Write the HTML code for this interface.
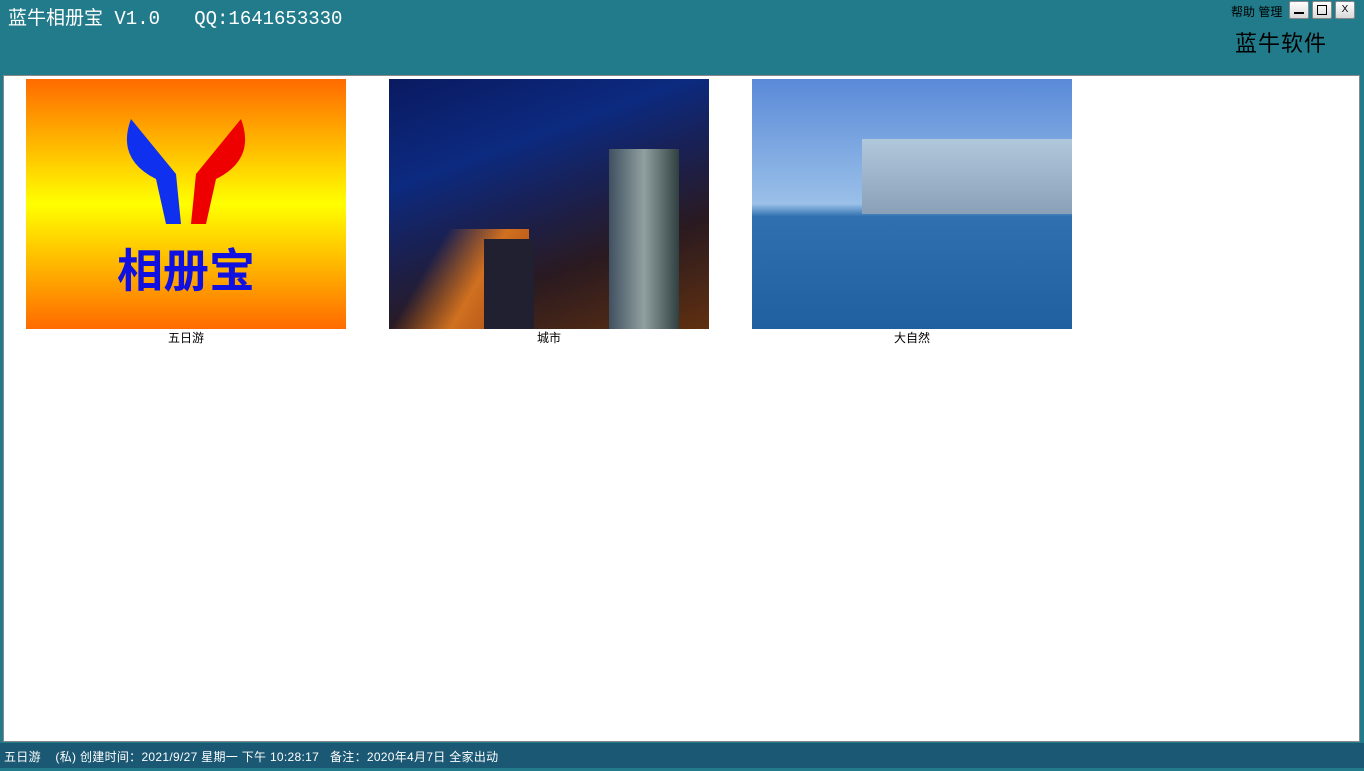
<!DOCTYPE html>
<html><head><meta charset="utf-8"><style>
body{margin:0;width:1364px;height:768px;overflow:hidden;background:#217b8a;font-family:"Liberation Sans","Noto Sans CJK SC",sans-serif;position:relative}
.t{position:absolute;left:8px;top:3px;color:#fff;font-family:"Liberation Mono","Noto Sans CJK SC",monospace;font-size:19px}
.main{position:absolute;left:3px;top:75px;width:1355px;height:665px;background:#fff;border:1px solid #888}
.im{position:absolute;top:3px;width:320px;height:250px;overflow:hidden}
.lb{position:absolute;top:253px;width:320px;text-align:center;font-size:12px;color:#000}
.sb{position:absolute;left:0;top:743px;width:1364px;height:25px;background:#1b5873;color:#fff;font-size:12px;line-height:28px;padding-left:4px;letter-spacing:0.3px}
.btn{position:absolute;top:1px;width:18px;height:16px;background:linear-gradient(#fff,#d8d8d8);border:1px solid #888;border-radius:2px;font-size:10px;text-align:center;line-height:16px;color:#000}
</style></head><body>
<div class="t">蓝牛相册宝 V1.0&nbsp;&nbsp;&nbsp;QQ:1641653330</div>
<div style="position:absolute;left:1231px;top:3px;font-size:12px;color:#000">帮助 管理</div>
<div class="btn" style="left:1289px"><div style="position:absolute;left:4px;top:10px;width:10px;height:2px;background:#000"></div></div>
<div class="btn" style="left:1312px"><div style="position:absolute;left:4px;top:3px;width:8px;height:8px;border:1px solid #000"></div></div>
<div class="btn" style="left:1335px">X</div>
<div style="position:absolute;left:1235px;top:26px;font-size:22px;color:#000;letter-spacing:1px">蓝牛软件</div>
<div class="main">
<div class="im" style="left:22px;background:linear-gradient(#ff6a00,#ffff00 50%,#ff6a00)">
<svg width="320" height="250"><path d="M105 40 Q90 80 130 100 L140 145 L155 145 L150 95 Z" fill="#1030f0"/><path d="M215 40 Q230 80 190 100 L180 145 L165 145 L170 95 Z" fill="#e00"/>
<text x="160" y="208" font-size="46" font-weight="bold" fill="#1010e0" text-anchor="middle" font-family="Noto Sans CJK SC">相册宝</text></svg></div>
<div class="lb" style="left:22px">五日游</div>
<div class="im" style="left:385px;background:linear-gradient(160deg,#0a1a60,#0c2a80 30%,#1a2050 50%,#2a1a20 70%,#603010)">
<div style="position:absolute;left:0;top:150px;width:140px;height:100px;background:linear-gradient(120deg,transparent 30%,#d07020 60%,#a04010)"></div>
<div style="position:absolute;left:220px;top:70px;width:70px;height:180px;background:linear-gradient(90deg,#405060,#90a0a0,#304040)"></div>
<div style="position:absolute;left:95px;top:160px;width:50px;height:90px;background:#202030"></div></div>
<div class="lb" style="left:385px">城市</div>
<div class="im" style="left:748px;background:linear-gradient(#5a8ad8,#9ac0e8 50%,#3070b0 55%,#2060a0)">
<div style="position:absolute;left:110px;top:60px;width:210px;height:75px;background:linear-gradient(#b0c8dc,#8aa0b8)"></div></div>
<div class="lb" style="left:748px">大自然</div>
</div>
<div class="sb">五日游&nbsp;&nbsp;&nbsp;&nbsp;(私) 创建时间：2021/9/27 星期一 下午 10:28:17&nbsp;&nbsp;&nbsp;备注：2020年4月7日 全家出动</div>
</body></html>
